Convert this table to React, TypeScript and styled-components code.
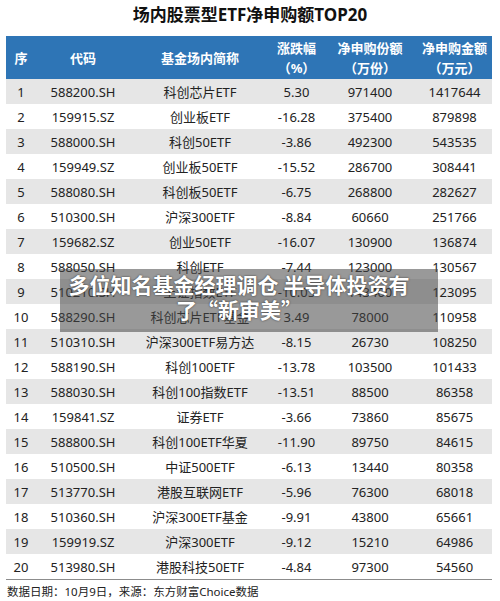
import React from 'react';
import styled, { createGlobalStyle } from 'styled-components';

const GlobalStyle = createGlobalStyle`
  body {
    margin: 0;
    background: #fff;
    font-family: 'Noto Sans', 'Noto Sans CJK SC', sans-serif;
  }
`;

const Page = styled.div`
  width: 500px;
  height: 601px;
  position: relative;
  overflow: hidden;
  background: #fff;
`;

const Title = styled.h1`
  margin: 0;
  height: 36px;
  line-height: 30px;
  text-align: center;
  font-size: 17px;
  font-weight: 700;
  color: #111;
  font-family: 'Noto Sans', 'Noto Sans CJK SC', sans-serif;
`;

const Table = styled.table`
  margin-left: 6px;
  width: 486px;
  border-collapse: collapse;
  table-layout: fixed;
  border-bottom: 1px solid #8c8c8c;
`;

const HeadCell = styled.th`
  background: #2e75b6;
  color: #fff;
  font-size: 13px;
  font-weight: 700;
  height: 43px;
  padding: 0;
  line-height: 20px;
  text-align: center;
  vertical-align: middle;
`;

const Row = styled.tr<{ $shade: boolean }>`
  background: ${(p) => (p.$shade ? '#e6e6e6' : '#fff')};
`;

const Cell = styled.td`
  height: 25px;
  padding: 0;
  font-size: 13px;
  color: #222;
  text-align: center;
  white-space: nowrap;
  vertical-align: middle;
`;

const Footer = styled.div`
  padding: 3px 0 0 7px;
  font-size: 11.5px;
  color: #222;
`;

// headline caption laid over the picture
const Caption = styled.div`
  position: absolute;
  left: 60px;
  top: 269px;
  width: 378px;
  height: 63px;
  box-sizing: border-box;
  padding: 3px 20px 0 0;
  background: rgba(70, 70, 70, 0.55);
  color: #fff;
  font-size: 21px;
  font-weight: 700;
  line-height: 25px;
  text-align: center;
  text-shadow: 0 0 2px rgba(0, 0, 0, 0.7);
  font-family: 'Noto Sans CJK SC', sans-serif;
`;

const rows: [string, string, string, string, string, string][] = [
  ['1', '588200.SH', '科创芯片ETF', '5.30', '971400', '1417644'],
  ['2', '159915.SZ', '创业板ETF', '-16.28', '375400', '879898'],
  ['3', '588000.SH', '科创50ETF', '-3.86', '492300', '543535'],
  ['4', '159949.SZ', '创业板50ETF', '-15.52', '286700', '308441'],
  ['5', '588080.SH', '科创板50ETF', '-6.75', '268800', '282627'],
  ['6', '510300.SH', '沪深300ETF', '-8.84', '60660', '251766'],
  ['7', '159682.SZ', '创业50ETF', '-16.07', '130900', '136874'],
  ['8', '588050.SH', '科创ETF', '-7.44', '123000', '130567'],
  ['9', '510210.SH', '上证指数ETF', '-10.05', '143400', '123095'],
  ['10', '588290.SH', '科创芯片ETF基金', '3.49', '78000', '110958'],
  ['11', '510310.SH', '沪深300ETF易方达', '-8.15', '26730', '108250'],
  ['12', '588190.SH', '科创100ETF', '-13.78', '103500', '101433'],
  ['13', '588030.SH', '科创100指数ETF', '-13.51', '88500', '86358'],
  ['14', '159841.SZ', '证券ETF', '-3.66', '73860', '85675'],
  ['15', '588800.SH', '科创100ETF华夏', '-11.90', '89750', '84615'],
  ['16', '510500.SH', '中证500ETF', '-6.13', '13440', '80358'],
  ['17', '513770.SH', '港股互联网ETF', '-5.96', '76300', '68018'],
  ['18', '510360.SH', '沪深300ETF基金', '-9.91', '43800', '65661'],
  ['19', '159919.SZ', '沪深300ETF', '-9.12', '15210', '64986'],
  ['20', '513980.SH', '港股科技50ETF', '-4.84', '97300', '54560'],
];

const widths = [30, 94, 140, 53, 94, 75];

const App: React.FC = () => (
  <Page>
    <GlobalStyle />
    <Title>场内股票型ETF净申购额TOP20</Title>
    <Table>
      <colgroup>
        {widths.map((w, i) => (
          <col key={i} style={{ width: w }} />
        ))}
      </colgroup>
      <thead>
        <tr>
          <HeadCell>序</HeadCell>
          <HeadCell>代码</HeadCell>
          <HeadCell>基金场内简称</HeadCell>
          <HeadCell>
            涨跌幅
            <br />（%）
          </HeadCell>
          <HeadCell>
            净申购份额
            <br />（万份）
          </HeadCell>
          <HeadCell>
            净申购金额
            <br />（万元）
          </HeadCell>
        </tr>
      </thead>
      <tbody>
        {rows.map((r, i) => (
          <Row key={r[0]} $shade={i % 2 === 0}>
            {r.map((c, j) => (
              <Cell key={j}>{c}</Cell>
            ))}
          </Row>
        ))}
      </tbody>
    </Table>
    <Footer>数据日期：10月9日，来源：东方财富Choice数据</Footer>
    <Caption>
      多位知名基金经理调仓 半导体投资有了“新审美”
    </Caption>
  </Page>
);

export default App;
